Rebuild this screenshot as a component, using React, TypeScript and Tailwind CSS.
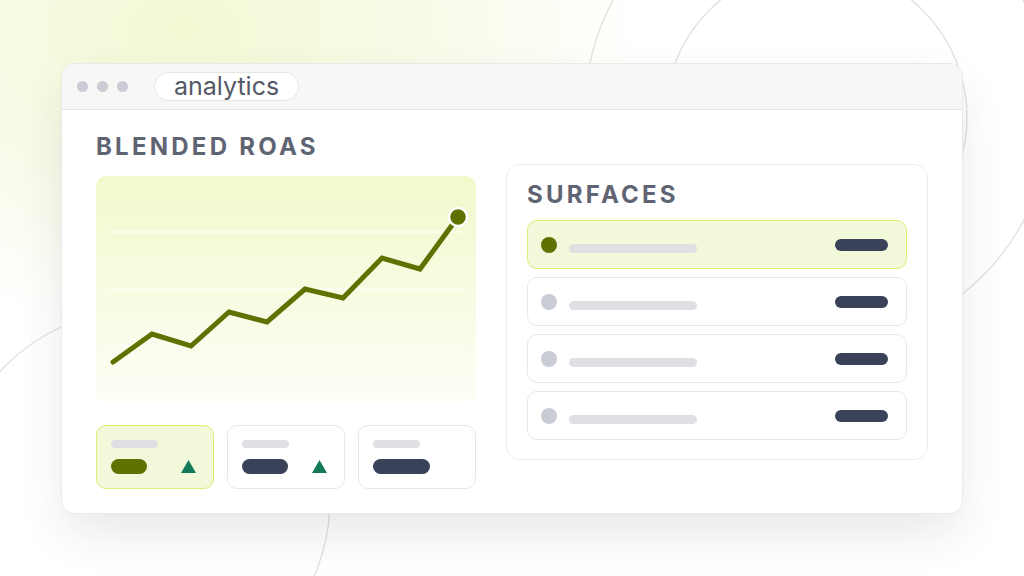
import React from 'react'

const points = [
  [17, 186],
  [56, 158],
  [95, 170],
  [133, 136],
  [171, 146],
  [209, 113],
  [247, 122],
  [286, 82],
  [324, 93],
  [362, 41],
]

const Backdrop = () => (
  <svg className="absolute inset-0" width="1024" height="576" viewBox="0 0 1024 576" fill="none">
    <circle cx="816" cy="117" r="151" stroke="#e3e3e1" strokeWidth="1.5" />
    <circle cx="818" cy="111" r="233" stroke="#e3e3e1" strokeWidth="1.5" />
    <circle cx="140" cy="500" r="190" stroke="#e3e3e1" strokeWidth="1.5" />
  </svg>
)

const Chart = () => (
  <div className="h-[226px] w-[380px] rounded-[10px] bg-gradient-to-b from-[#f1f9cc] to-[#fdfef6]">
    <svg width="380" height="226" viewBox="0 0 380 226" fill="none">
      <line x1="12" y1="56" x2="367" y2="56" stroke="#ffffff" strokeWidth="1.5" opacity="0.7" />
      <line x1="12" y1="113" x2="367" y2="113" stroke="#ffffff" strokeWidth="1.5" opacity="0.7" />
      <line x1="12" y1="170" x2="367" y2="170" stroke="#ffffff" strokeWidth="1.5" opacity="0.7" />
      <polyline
        points={points.map((p) => p.join(',')).join(' ')}
        stroke="#5d7200"
        strokeWidth="5"
        strokeLinecap="round"
        strokeLinejoin="miter"
        fill="none"
      />
      <circle cx="362" cy="41" r="9" fill="#5d7200" stroke="#ffffff" strokeWidth="2.5" />
    </svg>
  </div>
)

const Up = () => (
  <svg width="15" height="13" viewBox="0 0 15 13">
    <polygon points="7.5,0 15,13 0,13" fill="#127a58" />
  </svg>
)

const StatCard = ({ active, pill, up }: { active?: boolean; pill: number; up?: boolean }) => (
  <div
    className={
      active
        ? 'h-[64px] w-[118px] rounded-[10px] border border-[#d9f074] bg-[#f2f8da] pl-[14px] pr-[17px] pt-[14px]'
        : 'h-[64px] w-[118px] rounded-[10px] border border-[#e8e8e6] bg-white pl-[14px] pr-[17px] pt-[14px]'
    }
  >
    <div className="h-[8px] w-[47px] rounded-full bg-[#dfe0e4]" />
    <div className="mt-[11px] flex items-center justify-between">
      <div
        className={active ? 'h-[15px] rounded-full bg-[#5d7200]' : 'h-[15px] rounded-full bg-[#3a4259]'}
        style={{ width: pill }}
      />
      {up && <Up />}
    </div>
  </div>
)

const Row = ({ active }: { active?: boolean }) => (
  <div
    className={
      active
        ? 'flex h-[49px] items-center justify-between rounded-[10px] border border-[#d9f074] bg-[#f2f8da] pl-[13px] pr-[18px]'
        : 'flex h-[49px] items-center justify-between rounded-[10px] border border-[#e8e8e6] bg-white pl-[13px] pr-[18px]'
    }
  >
    <div className="flex items-center">
      <div className={active ? 'h-4 w-4 rounded-full bg-[#5d7200]' : 'h-4 w-4 rounded-full bg-[#c9ccd5]'} />
      <div className="ml-3 mt-2 h-[9px] w-[128px] rounded-full bg-[#dfe0e4]" />
    </div>
    <div className="h-[12px] w-[53px] rounded-full bg-[#3a4259]" />
  </div>
)

export default function App() {
  return (
    <div
      className="relative h-[576px] w-[1024px] overflow-hidden bg-[radial-gradient(ellipse_60%_70%_at_18%_5%,#f2f9d4_0%,#f8fbe9_40%,#ffffff_75%)] pl-[61px] pt-[63px]"
      style={{ fontFamily: 'Inter, "Noto Sans", sans-serif' }}
    >
      <Backdrop />
      <div className="relative h-[451px] w-[902px] overflow-hidden rounded-[13px] border border-[#e9e9e6] bg-white shadow-[0_22px_50px_-6px_rgba(40,40,50,0.12)]">
        <div className="flex h-[46px] items-center border-b border-[#e8e8e5] bg-[#f7f7f5] pl-[15px]">
          <div className="flex gap-[9px]">
            <div className="h-[11px] w-[11px] rounded-full bg-[#cbccd5]" />
            <div className="h-[11px] w-[11px] rounded-full bg-[#cbccd5]" />
            <div className="h-[11px] w-[11px] rounded-full bg-[#cbccd5]" />
          </div>
          <div className="ml-[26px] rounded-full border border-[#e4e4e1] bg-white px-[19px] text-[25px] leading-[27px] text-[#545968]">
            analytics
          </div>
        </div>
        <div className="flex items-start gap-[30px] pl-[34px] pt-[25px]">
          <div className="w-[380px]">
            <div className="text-[24px] font-bold leading-[24px] tracking-[0.135em] text-[#5f6473]">
              BLENDED ROAS
            </div>
            <div className="mt-[17px]">
              <Chart />
            </div>
            <div className="mt-[23px] flex gap-[13px]">
              <StatCard active pill={36} up />
              <StatCard pill={46} up />
              <StatCard pill={57} />
            </div>
          </div>
          <div className="mt-[29px] w-[422px] rounded-[14px] border border-[#ebebe8] px-[20px] pb-[19px] pt-[18px]">
            <div className="text-[24px] font-bold leading-[24px] tracking-[0.135em] text-[#5f6473]">SURFACES</div>
            <div className="mt-[13px] flex flex-col gap-2">
              <Row active />
              <Row />
              <Row />
              <Row />
            </div>
          </div>
        </div>
      </div>
    </div>
  )
}
